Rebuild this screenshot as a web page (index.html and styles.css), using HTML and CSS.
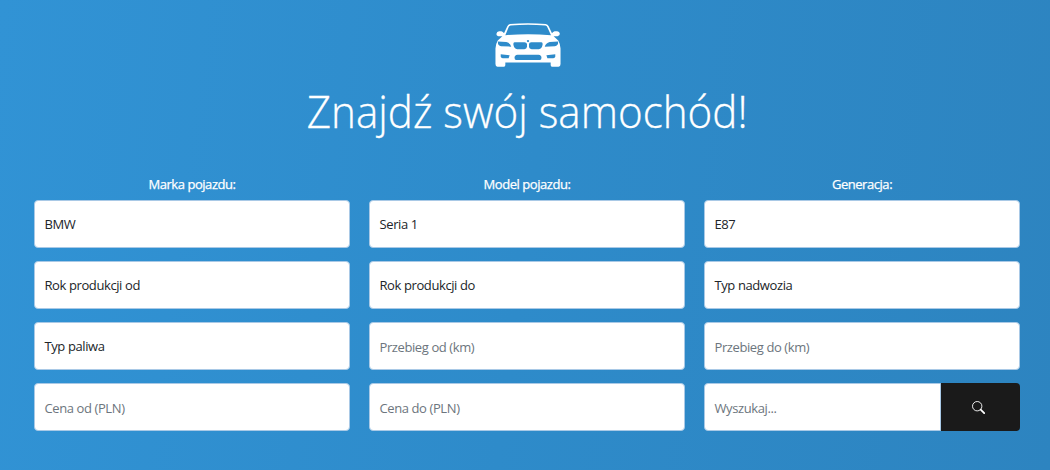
FILE: index.html
```
<!DOCTYPE html>
<html lang="pl">
<head>
<meta charset="utf-8">
<title>Znajdź swój samochód!</title>
<link rel="stylesheet" href="styles.css">
</head>
<body>
<main class="search">
  <svg class="car" viewBox="28 20 202 140" aria-hidden="true">
    <path fill="#fff" fill-rule="evenodd" d="M74 26Q129 21 183 26Q189 27 192 33L202 54Q205 49 210 48H218Q225 49 226 56Q226 62 219 63H207L221 76Q227 85 228 101V148Q228 156 222 156H202Q198 156 198 151V143H60V151Q60 156 56 156H36Q30 156 30 148V101Q31 85 37 76L51 63H39Q32 62 33 56Q34 49 41 48H48Q53 49 56 54L66 33Q69 27 74 26ZM76 31Q71 32 69 38L60 60Q129 54 199 60L189 38Q187 32 182 31Q129 26 76 31ZM38 79Q35 91 47 94L78 95Q75 84 63 81ZM220 79Q223 91 211 94L180 95Q183 84 195 81ZM88 82Q83 83 85 91Q87 102 96 103H118Q125 102 126 95V87Q125 82 118 82ZM139 82Q132 82 132 88V96Q133 102 140 103H162Q171 102 173 91Q175 83 170 82ZM46 118V126Q47 130 52 130H70L73 121ZM212 118V126Q211 130 206 130H188L185 121ZM97 120Q88 121 88 129Q88 136 93 136H165Q170 136 170 129Q170 121 161 120Z"/>
    <circle cx="129" cy="78" r="3.5" fill="#2f8dcc"/>
  </svg>
  <h1 class="title">Znajdź swój samochód!</h1>
  <form class="grid">
    <span class="label">Marka pojazdu:</span>
    <span class="label">Model pojazdu:</span>
    <span class="label">Generacja:</span>
    <div class="field">BMW</div>
    <div class="field">Seria 1</div>
    <div class="field">E87</div>
    <div class="field">Rok produkcji od</div>
    <div class="field">Rok produkcji do</div>
    <div class="field">Typ nadwozia</div>
    <div class="field">Typ paliwa</div>
    <div class="field hint">Przebieg od (km)</div>
    <div class="field hint">Przebieg do (km)</div>
    <div class="field hint">Cena od (PLN)</div>
    <div class="field hint">Cena do (PLN)</div>
    <div class="group">
      <div class="field hint">Wyszukaj...</div>
      <button class="submit" type="button" aria-label="Szukaj">
        <svg class="lens" viewBox="0 0 13 13" aria-hidden="true">
          <circle cx="5.2" cy="5.2" r="4.7" fill="none" stroke="#fff" stroke-width=".9"/>
          <path d="M8.7 8.7L12.2 12.1" stroke="#fff" stroke-width="1.8" stroke-linecap="round"/>
        </svg>
      </button>
    </div>
  </form>
</main>
</body>
</html>
```
FILE: styles.css
```
* {
  box-sizing: border-box;
}

body {
  margin: 0;
  font-family: "Segoe UI", "Open Sans", "Noto Sans", sans-serif;
  font-size: 13px;
}

.search {
  height: 470px;
  padding: 22px 30px 0 34px;
  display: flex;
  flex-direction: column;
  align-items: center;
  background: linear-gradient(97deg, #3193d5 0%, #2e8bca 50%, #2d84c0 100%);
}

.car {
  display: block;
  width: 68px;
  height: 46px;
  margin-left: 2px;
}

.title {
  margin: 12px 0 0;
  height: 62px;
  line-height: 62px;
  font-size: 45px;
  font-weight: 300;
  white-space: nowrap;
  color: #fff;
  -webkit-text-stroke: 0.3px #fff;
  transform: scaleX(0.937);
}

.grid {
  width: 100%;
  margin-top: 33px;
  display: grid;
  grid-template-columns: repeat(3, 316px);
  grid-template-rows: 12px repeat(4, 48px);
  column-gap: 19px;
  row-gap: 13px;
}

.label {
  line-height: 18px;
  text-align: center;
  color: #fff;
  letter-spacing: -0.45px;
  -webkit-text-stroke: 0.25px #fff;
}

.field {
  display: flex;
  align-items: center;
  padding: 0 9.5px;
  border: 1px solid #a9c9e6;
  border-radius: 4px;
  background: #fff;
  color: #212529;
  letter-spacing: -0.4px;
  white-space: nowrap;
}

.hint {
  padding-top: 1px;
  color: #6c757d;
}

.group {
  display: grid;
  grid-template-columns: 237px 79px;
}

.group .field {
  border-radius: 4px 0 0 4px;
}

.submit {
  display: flex;
  align-items: center;
  justify-content: center;
  padding: 0 5px 0 0;
  border: 0;
  border-radius: 0 4px 4px 0;
  background: #1a1a1a;
}

.lens {
  width: 13px;
  height: 13px;
}
```
